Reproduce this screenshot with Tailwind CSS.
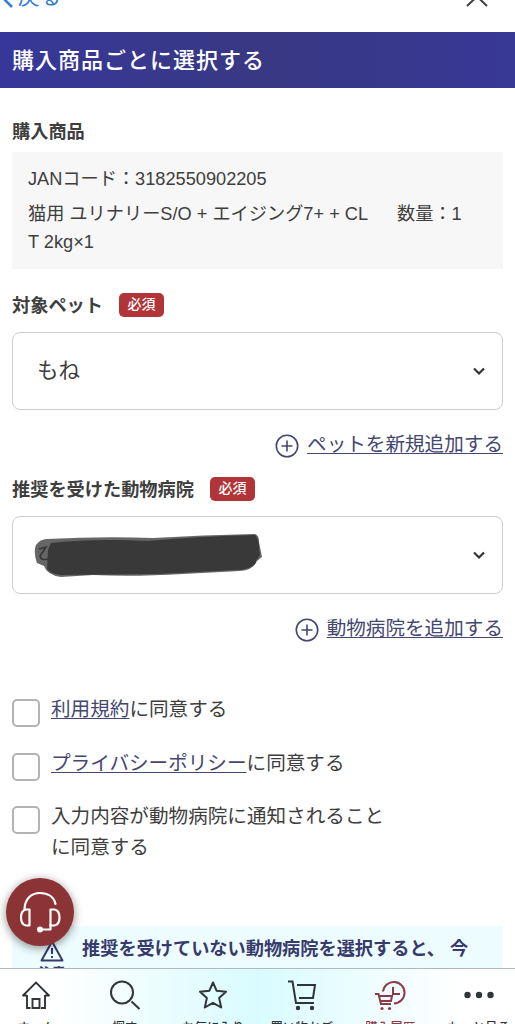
<!DOCTYPE html>
<html lang="ja">
<head>
  <meta charset="UTF-8">
  <meta name="viewport" content="width=device-width, initial-scale=1.0">
  <title>購入商品ごとに選択する</title>
  <script src="https://cdn.jsdelivr.net/npm/@tailwindcss/browser@4"></script>
</head>
<body class="h-[1024px] overflow-hidden bg-white text-[#3e3e3e] font-['Liberation_Sans','Noto_Sans_CJK_JP',sans-serif]">
  <div class="flex h-full flex-col overflow-hidden">
    <!-- Top bar -->
    <header class="flex h-8 shrink-0 items-end justify-between overflow-hidden pr-[27px] text-[#3480cc]">
      <div class="flex items-end">
        <svg class="mb-[24px] h-[18px] w-[14px]" viewBox="0 0 14 18" fill="none" stroke="currentColor" stroke-width="2.6"><path d="M12 1L4 9l8 8"/></svg>
        <span class="mb-[21px] ml-[4px] text-[21.5px] leading-[28px]">戻る</span>
      </div>
      <svg class="mb-[25px] h-5 w-[22px] text-[#3e3e3e]" viewBox="0 0 22 20" fill="none" stroke="currentColor" stroke-width="2"><path d="M1 0l20 19M21 0L1 19"/></svg>
    </header>

    <h1 class="flex h-14 shrink-0 items-center bg-linear-to-r from-[#37379a] via-[#383883] to-[#383896] px-3 text-[22px] font-medium tracking-[1px] text-white">購入商品ごとに選択する</h1>

    <main class="px-3 pt-[29px]">
      <h2 class="pt-px text-[18.2px] leading-7 font-bold">購入商品</h2>
      <div class="mt-[6px] h-[117px] bg-[#f7f7f7] px-4 pt-[13px] text-[18.2px] leading-7">
        <p>JANコード：3182550902205</p>
        <div class="mt-[7px] flex">
          <p class="w-[369px] whitespace-nowrap">猫用 ユリナリーS/O + エイジング7+ + CL<br>T 2kg×1</p>
          <p>数量：1</p>
        </div>
      </div>

      <!-- Pet -->
      <div class="mt-[22px] flex h-7 items-center">
        <label class="pt-[3px] text-[18.2px] font-bold">対象ペット</label>
        <span class="ml-4 flex h-6 w-[45px] items-center justify-center rounded-[5px] bg-[#b03438] pb-0.5 text-[14px] font-medium text-white">必須</span>
      </div>
      <div class="mt-[13px] flex h-[78px] items-center justify-between rounded-lg border-[1.5px] border-[#cbcdd0] pr-[17px] pl-6">
        <span class="text-[21.5px]">もね</span>
        <svg class="h-3 w-3" viewBox="0 0 12 12" fill="none" stroke="#333" stroke-width="2.2"><path d="M1 3.5l5 5 5-5"/></svg>
      </div>
      <div class="mt-[19px] flex h-[30px] items-center justify-end text-[#44476f]">
        <svg class="mt-1 mr-2 h-6 w-6" viewBox="0 0 24 24" fill="none" stroke="currentColor" stroke-width="1.6"><circle cx="12" cy="12" r="10.7"/><path d="M12 6.5v11M6.5 12h11"/></svg>
        <a class="pt-px text-[19.6px] underline decoration-1 underline-offset-[2px]">ペットを新規追加する</a>
      </div>

      <!-- Clinic -->
      <div class="mt-[16px] flex h-7 items-center">
        <label class="pt-[3px] text-[18.2px] font-bold">推奨を受けた動物病院</label>
        <span class="ml-4 flex h-6 w-[45px] items-center justify-center rounded-[5px] bg-[#b03438] pb-0.5 text-[14px] font-medium text-white">必須</span>
      </div>
      <div class="mt-[13px] flex h-[78px] items-center justify-between rounded-lg border-[1.5px] border-[#cbcdd0] pr-[17px] pl-5">
        <svg class="h-[46px] w-[232px]" viewBox="0 0 232 46">
          <path d="M3 13Q7 7 14 7Q70 4 120 6Q170 3 222 2Q226 3 226 10L229 25L224 29Q220 38 207 39L150 42Q100 45 60 43L28 45Q14 43 11 34L4 31Q0 20 3 13Z" fill="#666"/>
          <path d="M18 11Q60 6 115 9Q170 4 222 3Q226 7 226 16L227 23Q223 28 222 32Q216 38 203 38L125 42L28 43Q18 42 14 37L15 18Z" fill="#393939"/>
          <path d="M6 17l7-2-6 9q1 5 8 3" fill="none" stroke="#353535" stroke-width="1.6"/>
        </svg>
        <svg class="h-3 w-3" viewBox="0 0 12 12" fill="none" stroke="#333" stroke-width="2.2"><path d="M1 3.5l5 5 5-5"/></svg>
      </div>
      <div class="mt-[19px] flex h-[30px] items-center justify-end text-[#44476f]">
        <svg class="mt-1 mr-2 h-6 w-6" viewBox="0 0 24 24" fill="none" stroke="currentColor" stroke-width="1.6"><circle cx="12" cy="12" r="10.7"/><path d="M12 6.5v11M6.5 12h11"/></svg>
        <a class="pt-px text-[19.6px] underline decoration-1 underline-offset-[2px]">動物病院を追加する</a>
      </div>

      <!-- Agreements -->
      <div class="mt-[51px] flex flex-col gap-[20.5px] text-[19.6px] leading-[30.5px]">
        <div class="flex items-start">
          <span class="mt-[5px] h-7 w-7 shrink-0 rounded-[5px] border-2 border-[#b3b3b3]"></span>
          <p class="ml-[11px]"><a class="text-[#44476f] underline decoration-1 underline-offset-[2px]">利用規約</a>に同意する</p>
        </div>
        <div class="flex items-start">
          <span class="mt-[5px] h-7 w-7 shrink-0 rounded-[5px] border-2 border-[#b3b3b3]"></span>
          <p class="ml-[11px]"><a class="text-[#44476f] underline decoration-1 underline-offset-[2px]">プライバシーポリシー</a>に同意する</p>
        </div>
        <div class="flex items-start">
          <span class="mt-[5px] h-7 w-7 shrink-0 rounded-[5px] border-2 border-[#b3b3b3]"></span>
          <p class="ml-[11px]">入力内容が動物病院に通知されること<br>に同意する</p>
        </div>
      </div>

      <!-- Notice -->
      <div class="mt-[64px] flex h-[120px] bg-[#edfdff] pl-[26px] text-[#373a6b]">
        <div class="flex w-7 flex-col items-center pt-[14px]">
          <svg class="h-[22px] w-6" viewBox="0 0 24 22" fill="none" stroke="currentColor" stroke-width="2" stroke-linejoin="round"><path d="M12 1.5L22.5 20.5H1.5zM12 8v6M12 16v2"/></svg>
          <span class="mt-[2px] text-[13.5px] leading-5 font-bold">注意</span>
        </div>
        <p class="ml-4 pt-[9px] text-[18.2px] leading-7 font-bold whitespace-nowrap">推奨を受けていない動物病院を選択すると、 今</p>
      </div>
    </main>
  </div>

  <!-- Support button -->
  <button class="fixed top-[878px] left-[6px] flex h-[68px] w-[68px] items-center justify-center rounded-full bg-[#8c3336] shadow-[0_2px_10px_rgba(0,0,0,0.45)]">
    <svg class="h-[42px] w-[42px]" viewBox="0 0 42 42" fill="none" stroke="#fff" stroke-width="2.2" stroke-linejoin="round" stroke-linecap="round">
      <path d="M5.500 18C6 8 12 2 21 2c8 0 14 4 15.500 11"/>
      <path d="M10.500 18.500v16H7q-5-1-5-8t5-8zM31.500 18.500h4q5 1 5 8t-5 8h-4z"/>
      <path d="M31.500 34v4.500H21"/>
      <circle cx="21" cy="38.500" r="1.900" fill="#fff"/>
    </svg>
  </button>

  <!-- Bottom navigation -->
  <nav class="fixed bottom-0 left-0 h-14 w-full overflow-hidden border-t border-[#aeb9bd] bg-linear-to-r from-white from-10% via-[#d9fbff] to-white to-90%">
    <div class="-ml-2 grid w-[531px] grid-cols-6 text-center text-[12.5px] leading-4 font-medium text-[#303538]">
      <a class="flex flex-col items-center pt-[11px]">
        <svg class="h-8 w-8" viewBox="0 0 32 32" fill="none" stroke="currentColor" stroke-width="1.900"><path d="M2.500 16L16 2.500 29.500 16M7 15v13h3.500M25 15v13h-4M12.500 28v-9h7v9zM2.500 15.500H7M25 15.500h4.500"/></svg>
        <span class="mt-[8px]">ホーム</span>
      </a>
      <a class="flex flex-col items-center pt-[11px]">
        <svg class="h-8 w-8" viewBox="0 0 32 32" fill="none" stroke="currentColor" stroke-width="2"><circle cx="13" cy="12.500" r="11"/><path d="M22.500 21.500l8 7.500"/></svg>
        <span class="mt-[8px]">探す</span>
      </a>
      <a class="flex flex-col items-center pt-[11px]">
        <svg class="h-8 w-8" viewBox="0 0 32 32" fill="none" stroke="currentColor" stroke-width="2" stroke-linejoin="round"><path d="M16 2.500l3.700 8.300 9.300.9-6.900 6.200 2.100 9.600-8.200-4.700-8.200 4.700 2.100-9.600L3 11.700l9.300-.9z"/></svg>
        <span class="mt-[8px]">お気に入り</span>
      </a>
      <a class="flex flex-col items-center pt-[11px]">
        <svg class="h-8 w-8" viewBox="0 0 32 32" fill="none" stroke="currentColor" stroke-width="2"><path d="M2 1.500h4.500L10 23h18M11 5h18l-2 13H13"/><circle cx="12" cy="28" r="2.200" fill="currentColor" stroke="none"/><circle cx="26" cy="28" r="2.200" fill="currentColor" stroke="none"/></svg>
        <span class="mt-[8px]">買い物かご</span>
      </a>
      <a class="flex flex-col items-center pt-[11px] text-[#8c3a43]">
        <svg class="h-8 w-8" viewBox="0 0 32 32" fill="none" stroke="currentColor" stroke-width="2"><path d="M9 11.500A10.800 10.800 0 1 1 20 23.500M19 7v7h7"/><path d="M1 14h3.500l2.500 10h10M5.500 16H18l-1 5H7"/><circle cx="8" cy="28.500" r="1.600" fill="currentColor" stroke="none"/><circle cx="15.500" cy="28.500" r="1.600" fill="currentColor" stroke="none"/></svg>
        <span class="mt-[8px]">購入履歴</span>
      </a>
      <a class="flex flex-col items-center pt-[11px]">
        <svg class="h-8 w-8" viewBox="0 0 32 32" fill="currentColor"><circle cx="4.500" cy="15" r="3.200"/><circle cx="16" cy="15" r="3.200"/><circle cx="27.500" cy="15" r="3.200"/></svg>
        <span class="mt-[8px]">もっと見る</span>
      </a>
    </div>
  </nav>
</body>
</html>
